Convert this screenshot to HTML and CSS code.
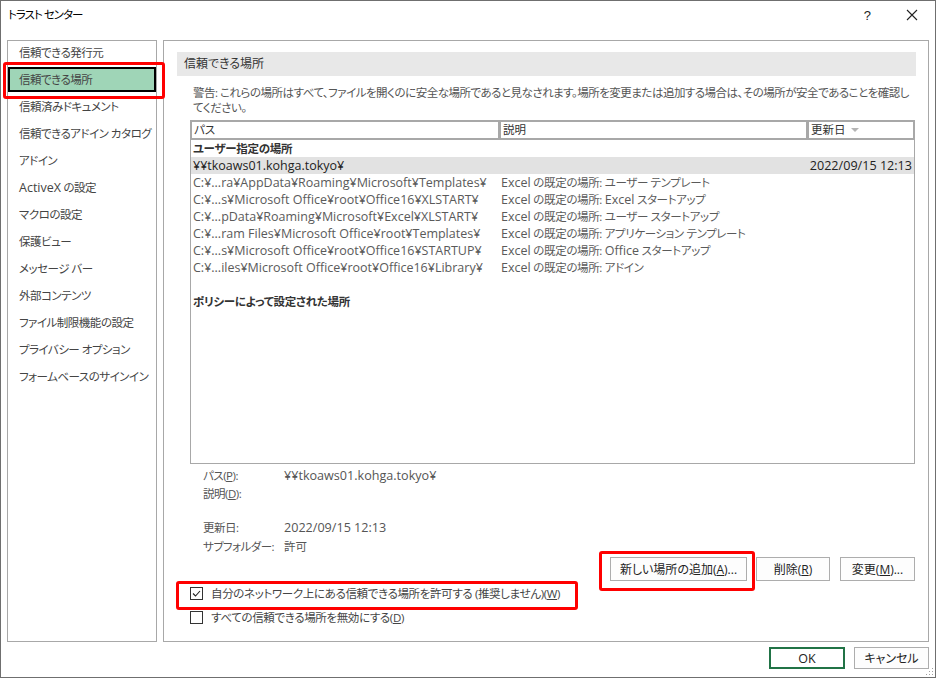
FILE: index.html
```html
<!DOCTYPE html>
<html lang="ja">
<head>
<meta charset="utf-8">
<title>トラスト センター</title>
<link rel="stylesheet" href="styles.css">
</head>
<body>
<div class="dialog">
  <div class="titlebar">
    <div class="title">トラスト センター</div>
    <div class="title-btns">
      <span class="help">?</span>
      <svg class="close" width="12" height="12" viewBox="0 0 12 12"><path d="M1 1 L11 11 M11 1 L1 11" stroke="#222" stroke-width="1.1" fill="none"/></svg>
    </div>
  </div>
  <div class="main">
    <div class="nav">
      <div class="nav-list">
        <div class="nav-item">信頼できる発行元</div>
        <div class="nav-item selected">信頼できる場所</div>
        <div class="nav-item">信頼済みドキュメント</div>
        <div class="nav-item">信頼できるアドイン カタログ</div>
        <div class="nav-item">アドイン</div>
        <div class="nav-item"><span class="lat">ActiveX</span> の設定</div>
        <div class="nav-item">マクロの設定</div>
        <div class="nav-item">保護ビュー</div>
        <div class="nav-item">メッセージ バー</div>
        <div class="nav-item">外部コンテンツ</div>
        <div class="nav-item">ファイル制限機能の設定</div>
        <div class="nav-item">プライバシー オプション</div>
        <div class="nav-item">フォームベースのサインイン</div>
      </div>
    </div>
    <div class="panel">
      <div class="band">信頼できる場所</div>
      <p class="warning">警告: これらの場所はすべて、ファイルを開くのに安全な場所であると見なされます。場所を変更または追加する場合は、その場所が安全であることを確認してください。</p>
      <div class="list">
        <div class="list-head">
          <div class="hcell h-path">パス</div>
          <div class="hcell h-desc">説明</div>
          <div class="hcell h-date">更新日 <svg class="sort" width="8" height="5" viewBox="0 0 8 5"><path d="M0 0 L8 0 L4 4 Z" fill="#b4b4b4"/></svg></div>
        </div>
        <div class="row group">ユーザー指定の場所</div>
        <div class="row sel"><span class="c-path">¥¥tkoaws01.kohga.tokyo¥</span><span class="c-desc"></span><span class="c-date">2022/09/15 12:13</span></div>
        <div class="row"><span class="c-path">C:¥...ra¥AppData¥Roaming¥Microsoft¥Templates¥</span><span class="c-desc"><span class="lat">Excel</span> の既定の場所: ユーザー テンプレート</span></div>
        <div class="row"><span class="c-path">C:¥...s¥Microsoft Office¥root¥Office16¥XLSTART¥</span><span class="c-desc"><span class="lat">Excel</span> の既定の場所: <span class="lat">Excel</span> スタートアップ</span></div>
        <div class="row"><span class="c-path">C:¥...pData¥Roaming¥Microsoft¥Excel¥XLSTART¥</span><span class="c-desc"><span class="lat">Excel</span> の既定の場所: ユーザー スタートアップ</span></div>
        <div class="row"><span class="c-path">C:¥...ram Files¥Microsoft Office¥root¥Templates¥</span><span class="c-desc"><span class="lat">Excel</span> の既定の場所: アプリケーション テンプレート</span></div>
        <div class="row"><span class="c-path">C:¥...s¥Microsoft Office¥root¥Office16¥STARTUP¥</span><span class="c-desc"><span class="lat">Excel</span> の既定の場所: <span class="lat">Office</span> スタートアップ</span></div>
        <div class="row"><span class="c-path">C:¥...iles¥Microsoft Office¥root¥Office16¥Library¥</span><span class="c-desc"><span class="lat">Excel</span> の既定の場所: アドイン</span></div>
        <div class="row"></div>
        <div class="row group">ポリシーによって設定された場所</div>
      </div>
      <div class="details">
        <div class="drow"><span class="dlabel">パス(<u>P</u>):</span><span class="dval">¥¥tkoaws01.kohga.tokyo¥</span></div>
        <div class="drow"><span class="dlabel">説明(<u>D</u>):</span><span class="dval"></span></div>
        <div class="dspacer"></div>
        <div class="drow2"><span class="dlabel">更新日:</span><span class="dval">2022/09/15 12:13</span></div>
        <div class="drow2"><span class="dlabel">サブフォルダー:</span><span class="dval jp">許可</span></div>
      </div>
      <div class="btnrow">
        <button class="btn b-add">新しい場所の追加(<u>A</u>)...</button>
        <button class="btn b-del">削除(<u>R</u>)</button>
        <button class="btn b-mod">変更(<u>M</u>)...</button>
      </div>
      <div class="checks">
        <label class="chk"><span class="box"><svg width="11" height="11" viewBox="0 0 11 11"><path d="M2 5.5 L4.5 8 L9 3" stroke="#222" stroke-width="1.1" fill="none"/></svg></span>自分のネットワーク上にある信頼できる場所を許可する (推奨しません)(<u>W</u>)</label>
        <label class="chk"><span class="box"></span>すべての信頼できる場所を無効にする(<u>D</u>)</label>
      </div>
    </div>
  </div>
  <div class="footer">
    <button class="btn ok">OK</button>
    <button class="btn cancel">キャンセル</button>
  </div>
  <svg class="grip" width="8" height="8" viewBox="0 0 8 8"><g fill="#a0a0a0"><rect x="6" y="0" width="1" height="1"/><rect x="3" y="3" width="1" height="1"/><rect x="6" y="3" width="1" height="1"/><rect x="0" y="6" width="1" height="1"/><rect x="3" y="6" width="1" height="1"/><rect x="6" y="6" width="1" height="1"/></g></svg>
  <div class="mark mark-nav"></div>
  <div class="mark mark-add"></div>
  <div class="mark mark-chk"></div>
</div>
</body>
</html>
```
FILE: styles.css
```css
* { box-sizing: border-box; }
html, body { margin: 0; padding: 0; background: #fff; }
body {
  font-family: "Open Sans", "Noto Sans CJK JP", sans-serif;
  font-size: 11.5px;
  font-feature-settings: "palt";
  color: #333;
}
.lat { font-size: 12.5px; letter-spacing: 0; }
.dialog {
  position: relative;
  width: 936px;
  height: 678px;
  border: 1px solid #6f6f6f;
  background: #fff;
}
.titlebar {
  height: 39px;
  display: flex;
  justify-content: space-between;
  align-items: flex-start;
  padding: 5px 0 0 7px;
}
.title { line-height: 18px; color: #000; letter-spacing: -1px; }
.title-btns { display: flex; align-items: center; height: 18px; }
.help { font-family: "Liberation Sans", sans-serif; font-size: 13px; color: #222; margin-right: 35px; }
.close { margin-right: 17px; }
.main {
  display: flex;
  padding-left: 6px;
  gap: 6px;
  height: 602px;
}
.nav {
  width: 150px;
  height: 602px;
  border: 1px solid #a8a8a8;
}
.nav-list { margin-top: -2px; }
.nav-item {
  height: 27px;
  line-height: 27px;
  padding-left: 11px;
  color: #444;
  white-space: nowrap;
  letter-spacing: -0.5px;
}
.nav-item.selected {
  height: 25px;
  line-height: 21px;
  margin: 1px 0 1px 0;
  border: 2px solid #000;
  background: #9fd5b7;
  padding-left: 9px;
}
.panel {
  width: 766px;
  height: 602px;
  border: 1px solid #a8a8a8;
  display: flex;
  flex-direction: column;
}
.band {
  margin: 11px 12px 0 13px;
  height: 24px;
  line-height: 24px;
  background: #e8e8e8;
  padding-left: 7px;
  color: #333;
  font-size: 12px;
}
.warning {
  margin: 9px 12px 0 29px;
  line-height: 15px;
  color: #555;
  letter-spacing: -0.5px;
}
.list {
  margin: 5px 0 0 26px;
  width: 725px;
  height: 344px;
  border: 1px solid #a8a8a8;
  border-top: none;
}
.list-head {
  display: flex;
  gap: 3px;
  background: #a8a8a8;
  padding: 2px;
  margin: 0 -1px;
}
.hcell {
  background: #fff;
  height: 16px;
  line-height: 16px;
  padding-left: 2px;
  color: #333;
}
.h-path { width: 306px; }
.h-desc { width: 305px; }
.h-date { flex: 1; display: flex; align-items: center; gap: 5px; }
.row {
  display: flex;
  height: 17px;
  line-height: 17px;
  padding: 0 2px;
  color: #5a5a5a;
  white-space: nowrap;
}
.row.group { font-weight: bold; color: #333; letter-spacing: -0.3px; }
.row.sel { background: #e2e2e2; color: #222; }
.c-path { width: 308px; flex: none; font-size: 12.5px; }
.c-desc { flex: 1; letter-spacing: -0.35px; }
.c-date { text-align: right; font-size: 12.6px; }
.details { margin: 3px 0 0 39px; color: #555; }
.drow { display: flex; height: 18px; line-height: 18px; }
.drow2 { display: flex; height: 19px; line-height: 19px; }
.dspacer { height: 15px; }
.dlabel { width: 81px; letter-spacing: -0.5px; }
.dval { font-size: 12.6px; }
.dval.jp { font-size: 11.5px; }
.btnrow {
  display: flex;
  justify-content: flex-end;
  margin: 1px 13px 0 0;
}
.btn {
  font: inherit;
  font-feature-settings: "palt";
  background: #fdfdfd;
  border: 1px solid #adadad;
  color: #222;
  height: 24px;
  padding: 0;
  margin: 0;
  font-size: 12px;
}
.b-add { width: 137px; }
.b-del { width: 74px; margin-left: 9px; }
.b-mod { width: 75px; margin-left: 10px; }
.checks { margin-left: 26px; }
.chk {
  display: flex;
  align-items: center;
  height: 24px;
  color: #444;
  letter-spacing: -0.35px;
}
.box {
  width: 13px;
  height: 13px;
  border: 1px solid #333;
  margin-right: 8px;
  display: flex;
  align-items: center;
  justify-content: center;
  background: #fff;
}
.footer {
  display: flex;
  justify-content: flex-end;
  gap: 9px;
  margin: 5px 6px 0 0;
}
.ok { width: 76px; height: 22px; border: 2px solid #217346; background: #fff; font-size: 12.5px; }
.cancel { width: 75px; height: 22px; }
.grip { position: absolute; right: 1px; bottom: 1px; }
.mark {
  position: absolute;
  border: 3px solid #ff0000;
  border-radius: 3px;
}
.mark-nav { left: 2px; top: 61px; width: 162px; height: 37px; }
.mark-add { left: 598px; top: 550px; width: 156px; height: 40px; }
.mark-chk { left: 175px; top: 580px; width: 402px; height: 29px; }
```
